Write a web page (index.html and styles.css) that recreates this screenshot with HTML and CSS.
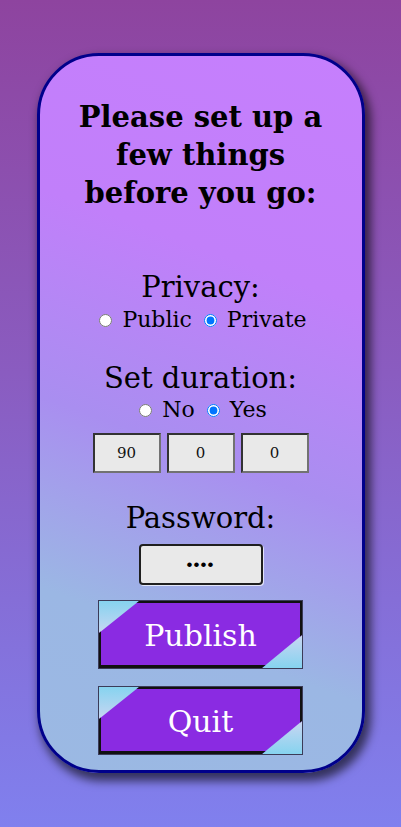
FILE: index.html
```html
<!DOCTYPE html>
<html lang="en">
<head>
<meta charset="utf-8">
<title>Before you go</title>
<link rel="stylesheet" href="styles.css">
</head>
<body>
<div class="card">
  <h1 class="title">Please set up a<br>few things<br>before you go:</h1>

  <div class="label label-privacy">Privacy:</div>
  <div class="choices choices-privacy">
    <input type="radio" name="privacy" id="pub"> <label for="pub">Public</label>
    <input type="radio" name="privacy" id="priv" checked> <label for="priv">Private</label>
  </div>

  <div class="label label-duration">Set duration:</div>
  <div class="choices choices-duration">
    <input type="radio" name="duration" id="dno"> <label for="dno">No</label>
    <input type="radio" name="duration" id="dyes" checked> <label for="dyes">Yes</label>
  </div>

  <div class="duration-row">
    <input class="num" type="text" value="90">
    <input class="num" type="text" value="0">
    <input class="num" type="text" value="0">
  </div>

  <div class="label label-password">Password:</div>
  <input class="pass" type="password" value="abcd">

  <button class="btn btn-publish"><span class="btn-face">Publish</span></button>
  <button class="btn btn-quit"><span class="btn-face">Quit</span></button>
</div>
</body>
</html>
```

FILE: styles.css
```css
html, body {
  margin: 0;
  padding: 0;
}

body {
  min-height: 827px;
  background: linear-gradient(to bottom, #8e449f 0%, #8a5cc0 45%, #8080ee 100%);
  font-family: "DejaVu Serif", serif;
  color: #000;
  overflow: hidden;
}

.card {
  box-sizing: border-box;
  width: 328px;
  height: 720px;
  margin: 53px auto 0;
  border: 3px solid #00008b;
  border-radius: 62px;
  background: linear-gradient(200deg, #c67ffd 0%, #c17ffa 30%, #a98ef0 55%, #9bb7e4 78%, #9bb9e3 100%);
  box-shadow: 4px 6px 10px 2px rgba(0, 0, 0, 0.6);
  display: flex;
  flex-direction: column;
  align-items: center;
}

.title {
  margin: 42px 0 0;
  font-size: 29px;
  font-weight: bold;
  line-height: 38px;
  text-align: center;
}

.label {
  font-size: 29px;
  line-height: 32px;
  text-align: center;
}

.label-privacy { margin-top: 59px; }
.label-duration { margin-top: 28px; }
.label-password { margin-top: 29px; }

.choices {
  font-size: 22px;
  line-height: 28px;
  text-align: center;
}

.choices input {
  margin: 3px 3px 0 5px;
}

.choices-privacy { margin-top: 3px; }
.choices-duration { margin-top: 2px; }

.duration-row {
  margin-top: 9px;
  display: flex;
  gap: 6px;
}

.num {
  box-sizing: border-box;
  width: 68px;
  height: 40px;
  margin: 0;
  padding: 0;
  border: 2px solid;
  border-color: #333 #727272 #727272 #333;
  background: #e9e9e9;
  font-family: "DejaVu Serif", serif;
  font-size: 15px;
  color: #111;
  text-align: center;
}

.pass {
  box-sizing: border-box;
  width: 124px;
  height: 41px;
  margin: 10px 0 0;
  padding: 0;
  border: 2px solid #1f1f1f;
  border-radius: 4px;
  background: #e9e9e9;
  box-shadow: 1px 1px 0 rgba(255, 255, 255, 0.7);
  font-size: 17px;
  letter-spacing: 1px;
  text-align: center;
  color: #000;
}

.btn {
  box-sizing: border-box;
  display: block;
  width: 205px;
  height: 69px;
  padding: 0;
  border: 1px solid #3b3b58;
  background: linear-gradient(to bottom, #86d3ef 0%, #c8d6f2 48%, #c8d6f2 52%, #86d3ef 100%);
  font-family: "DejaVu Serif", serif;
  cursor: pointer;
}

.btn-publish { margin-top: 15px; }
.btn-quit { margin-top: 17px; }

.btn-face {
  box-sizing: border-box;
  height: 100%;
  display: flex;
  align-items: center;
  justify-content: center;
  padding-top: 2px;
  border: 2px solid #111;
  border-bottom-width: 3px;
  background: #8a2be2;
  color: #fff;
  font-size: 30px;
  clip-path: polygon(40px 0, 100% 0, 100% calc(100% - 33px), calc(100% - 40px) 100%, 0 100%, 0 32px);
}
```
